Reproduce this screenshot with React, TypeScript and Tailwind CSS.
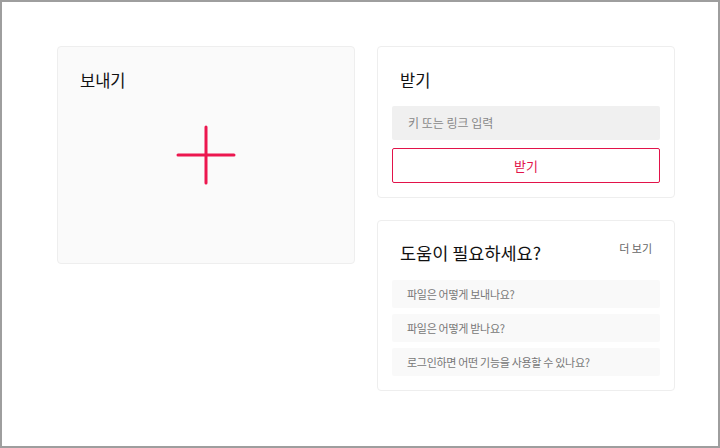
const FAQS = [
  '파일은 어떻게 보내나요?',
  '파일은 어떻게 받나요?',
  '로그인하면 어떤 기능을 사용할 수 있나요?',
]

export default function App() {
  return (
    <div
      className="w-[720px] h-[448px] border-2 border-[#9e9e9e] bg-white pt-[44px] pl-[55px] flex items-start gap-[22px]"
      style={{ fontFamily: '"Noto Sans CJK KR", "Noto Sans", sans-serif' }}
    >
      {/* 보내기 */}
      <section className="w-[298px] h-[218px] bg-[#fafafa] border border-[#eeeeee] rounded-[4px] grid">
        <h2 className="col-start-1 row-start-1 self-start px-[22px] pt-[23px] text-[16.5px] leading-5 text-[#111]">보내기</h2>
        <div className="col-start-1 row-start-1 self-center justify-self-center">
          <svg width="60" height="60" viewBox="0 0 60 60">
            <path d="M30 2v56M2 30h56" stroke="#ec174f" strokeWidth="3" strokeLinecap="round" />
          </svg>
        </div>
      </section>

      <div className="w-[298px] flex flex-col gap-[22px]">
        {/* 받기 */}
        <section className="bg-white border border-[#eeeeee] rounded-[4px] p-[14px]">
          <h2 className="mt-[9px] px-2 text-[16.5px] leading-5 text-[#111]">받기</h2>
          <div className="mt-4 h-[34px] bg-[#f0f0f0] rounded-[2px] flex items-center px-4 text-[12px] text-[#888]">
            키 또는 링크 입력
          </div>
          <button className="mt-2 w-full h-[35px] border border-[#e2134a] rounded-[2px] text-[13px] text-[#e2134a] bg-white">
            받기
          </button>
        </section>

        {/* 도움말 */}
        <section className="bg-white border border-[#eeeeee] rounded-[4px] p-[14px]">
          <div className="mt-2 px-2 flex items-start justify-between">
            <h2 className="text-[17.5px] leading-5 text-[#111]">도움이 필요하세요?</h2>
            <span className="text-[11px] leading-4 text-[#666] -mt-[3px]">더 보기</span>
          </div>
          <div className="mt-[17px] flex flex-col gap-[6px]">
            {FAQS.map((q) => (
              <div
                key={q}
                className="h-[28px] bg-[#f9f9f9] rounded-[2px] flex items-center px-[15px] text-[11px] tracking-[-0.3px] text-[#777]"
              >
                {q}
              </div>
            ))}
          </div>
        </section>
      </div>
    </div>
  )
}
